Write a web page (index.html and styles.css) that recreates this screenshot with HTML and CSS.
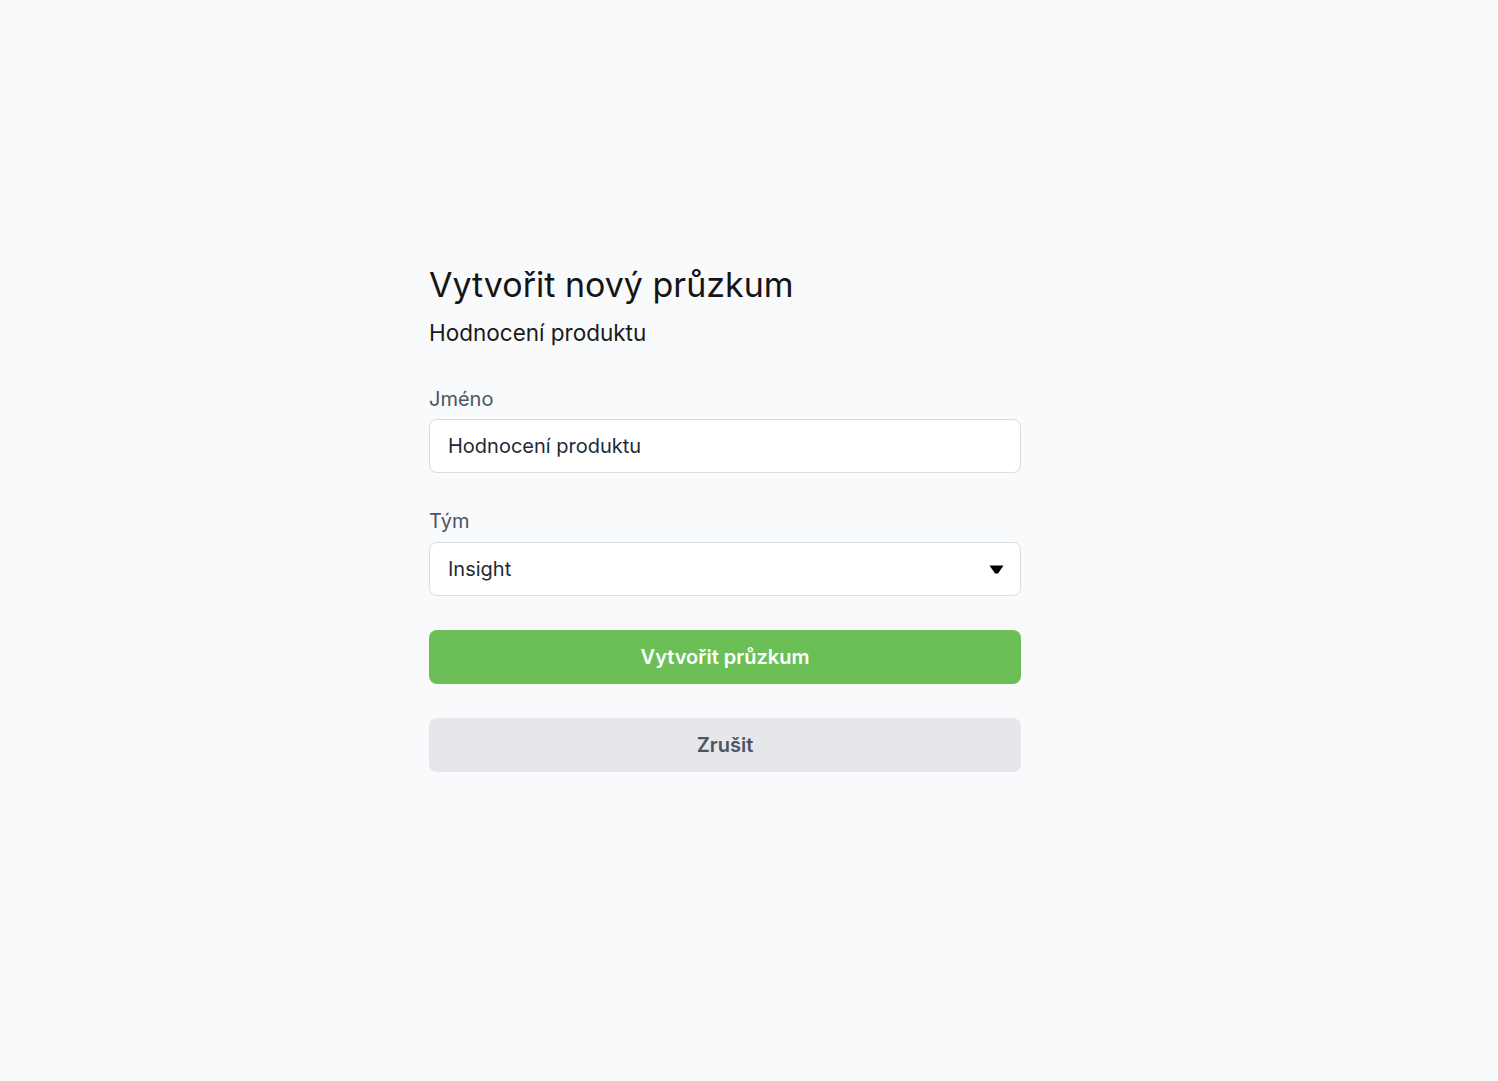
FILE: index.html
```html
<!DOCTYPE html>
<html lang="cs">
<head>
<meta charset="utf-8">
<title>Vytvořit nový průzkum</title>
<link rel="stylesheet" href="styles.css">
</head>
<body>
<main class="page">
  <form class="form">
    <h1 class="title">Vytvořit nový průzkum</h1>
    <p class="subtitle">Hodnocení produktu</p>
    <div class="field">
      <label class="label" for="name">Jméno</label>
      <input class="input" id="name" type="text" value="Hodnocení produktu">
    </div>
    <div class="field">
      <label class="label" for="team">Tým</label>
      <div class="select-wrap">
        <select class="input select" id="team">
          <option>Insight</option>
        </select>
        <svg class="caret" width="15" height="9" viewBox="0 0 15 9"><path d="M0.5 0.5h14L9 8.5H6z" fill="#000"/></svg>
      </div>
    </div>
    <button class="btn btn-primary" type="button">Vytvořit průzkum</button>
    <button class="btn btn-secondary" type="button">Zrušit</button>
  </form>
</main>
</body>
</html>
```

FILE: styles.css
```css
* { box-sizing: border-box; }
html, body { margin: 0; padding: 0; }
body {
  background: #f9fafb;
  font-family: Inter, "Noto Sans", sans-serif;
  color: #111827;
}
.page {
  display: flex;
  justify-content: center;
  padding-top: 265px;
  padding-right: 48px;
}
.form {
  width: 592px;
  display: flex;
  flex-direction: column;
}
.title {
  margin: 0;
  font-size: 34px;
  line-height: 40px;
  font-weight: 400;
  color: #151515;
}
.subtitle {
  margin: 13px 0 0;
  font-size: 22.5px;
  line-height: 30px;
  color: #1a1a1a;
}
.field {
  display: flex;
  flex-direction: column;
  margin-top: 34px;
}
.subtitle + .field { margin-top: 37px; }
.label {
  font-size: 20px;
  line-height: 28px;
  color: #4b5563;
  margin-bottom: 6px;
}
.field + .field .label { margin-bottom: 7px; }
.input {
  height: 54px;
  width: 100%;
  border: 1px solid #d9dce1;
  border-radius: 8px;
  background: #fff;
  padding: 0 18px;
  font-family: inherit;
  font-size: 20px;
  color: #1f2937;
  outline: none;
}
.select-wrap { position: relative; }
.select {
  appearance: none;
  -webkit-appearance: none;
}
.caret {
  position: absolute;
  right: 17px;
  top: 23px;
  pointer-events: none;
}
.btn {
  height: 54px;
  width: 100%;
  border: none;
  border-radius: 8px;
  font-family: inherit;
  font-size: 20px;
  font-weight: 600;
  margin-top: 34px;
  cursor: pointer;
}
.btn-primary {
  background: #6cbf57;
  color: #fff;
}
.btn-secondary {
  background: #e5e7eb;
  color: #4b5563;
}
```
